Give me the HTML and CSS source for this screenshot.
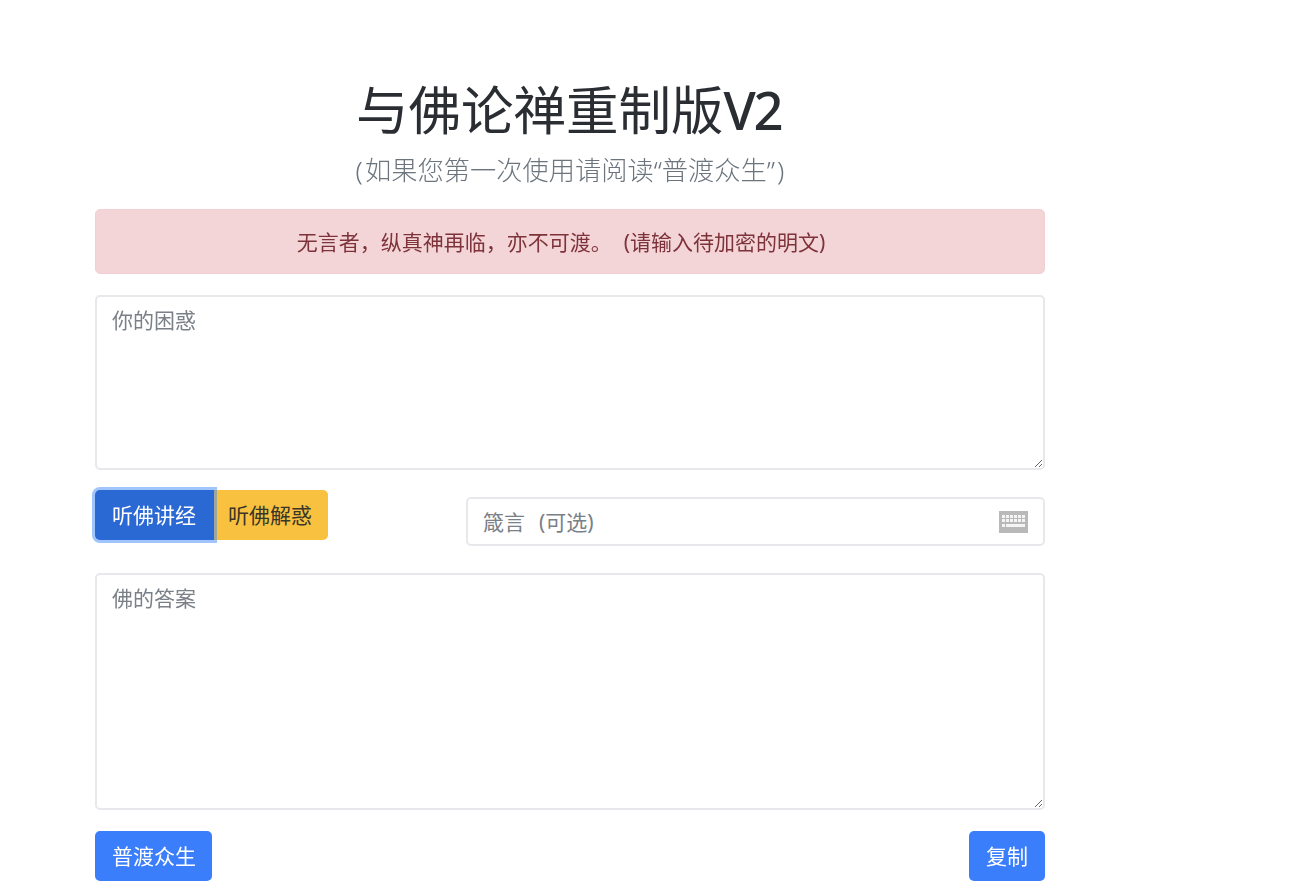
FILE: index.html
```html
<!DOCTYPE html>
<html lang="zh-CN">
<head>
<meta charset="utf-8">
<title>与佛论禅重制版V2</title>
<link rel="stylesheet" href="styles.css">
</head>
<body>
<main class="page">
  <header class="head">
    <h1 class="title">与佛论禅重制版<span class="title-latin">V2</span></h1>
    <p class="lead"><span class="paren-open">(</span>如果您第一次使用请阅读“普渡众生”<span class="paren-close">)</span></p>
  </header>
  <div class="alert">无言者，纵真神再临，亦不可渡。<span class="alert-open">(</span>请输入待加密的明文<span class="alert-close">)</span></div>
  <textarea class="area area-in" placeholder="你的困惑"></textarea>
  <div class="controls">
    <div class="group">
      <button class="btn btn-dark-blue" type="button">听佛讲经</button>
      <button class="btn btn-yellow" type="button">听佛解惑</button>
    </div>
    <div class="key-field">
      <input class="key-input" type="text" placeholder="箴言&#8194;&#8201;(可选)">
      <svg class="key-icon" width="29" height="22" viewBox="0 0 29 22" aria-hidden="true">
        <rect width="29" height="22" fill="#b9b9b9"/>
        <g fill="#f4f4f4">
          <rect x="3" y="4" width="3" height="3"/><rect x="7" y="4" width="3" height="3"/><rect x="11" y="4" width="3" height="3"/><rect x="15" y="4" width="3" height="3"/><rect x="19" y="4" width="3" height="3"/><rect x="23" y="4" width="3" height="3"/>
          <rect x="3" y="8" width="3" height="3"/><rect x="7" y="8" width="3" height="3"/><rect x="11" y="8" width="3" height="3"/><rect x="15" y="8" width="3" height="3"/><rect x="19" y="8" width="3" height="3"/><rect x="23" y="8" width="3" height="3"/>
          <rect x="3" y="13" width="3" height="3"/><rect x="7" y="13" width="19" height="3"/>
        </g>
      </svg>
    </div>
  </div>
  <textarea class="area area-out" placeholder="佛的答案"></textarea>
  <div class="actions">
    <button class="btn btn-blue" type="button">普渡众生</button>
    <button class="btn btn-blue btn-copy" type="button">复制</button>
  </div>
</main>
</body>
</html>
```

FILE: styles.css
```css
* { box-sizing: border-box; }
html, body { margin: 0; padding: 0; background: #fff; }
body {
  font-family: "Noto Sans", "Noto Sans CJK SC", sans-serif;
  font-size: 21px;
  line-height: 1.5;
  color: #212529;
}
.page {
  width: 950px;
  margin-left: 95px;
  padding-top: 78px;
  filter: blur(0.55px);
}
.head { text-align: center; }
.title {
  margin: 0;
  font-size: 52.5px;
  font-weight: 400;
  line-height: 63px;
  color: #2a2e33;
}
.title-latin {
  margin-right: 3px;
  font-weight: 500;
  letter-spacing: -2.5px;
}
.lead {
  margin: 10px 0 19px;
  font-size: 26.25px;
  font-weight: 300;
  line-height: 39px;
  color: #6c757d;
}
.paren-open { margin-right: 2px; }
.paren-close { margin-left: 2px; }
.alert {
  height: 65px;
  padding: 17px 26px;
  margin-bottom: 21px;
  border: 1px solid #f0d0d4;
  border-radius: 5px;
  background: #f3d5d8;
  color: #7d3339;
  font-size: 21px;
  line-height: 31px;
  text-align: center;
}
.alert-open { margin-left: 12px; }
.alert-close { margin-right: 18px; }
.area {
  display: block;
  width: 100%;
  padding: 8px 15px;
  border: 2px solid #e6e8eb;
  border-radius: 5px;
  outline: 0;
  font: inherit;
  color: #495057;
  background: #fff;
}
.area::placeholder, .key-input::placeholder { color: #7a8087; opacity: 1; }
.area-in { height: 175px; }
.area-out { height: 237px; }
.controls {
  display: flex;
  justify-content: space-between;
  align-items: flex-start;
  margin: 20px 0 27px;
}
.group { display: flex; }
.btn {
  height: 50px;
  padding: 0 16px 0 17px;
  border: 0;
  border-radius: 5px;
  font: inherit;
  line-height: 48px;
  white-space: nowrap;
  cursor: pointer;
}
.btn-dark-blue {
  position: relative;
  z-index: 1;
  padding: 0 18px 0 17px;
  color: #fff;
  background: #2a68d4;
  border-radius: 5px 0 0 5px;
  box-shadow: 0 0 0 3px rgba(64, 140, 250, .5);
}
.btn-yellow {
  padding: 0 16px 0 14px;
  color: #3a3528;
  background: #f8c140;
  border-radius: 0 5px 5px 0;
}
.btn-blue { color: #fff; background: #3b7efc; }
.btn-copy { padding-right: 17px; }
.key-field { position: relative; width: 579px; margin-top: 7px; }
.key-input {
  display: block;
  width: 100%;
  height: 49px;
  padding: 0 15px;
  border: 2px solid #e6e8eb;
  border-radius: 5px;
  outline: 0;
  font: inherit;
}
.key-icon { position: absolute; top: 14px; right: 17px; }
.actions {
  display: flex;
  justify-content: space-between;
  margin-top: 21px;
}
```
